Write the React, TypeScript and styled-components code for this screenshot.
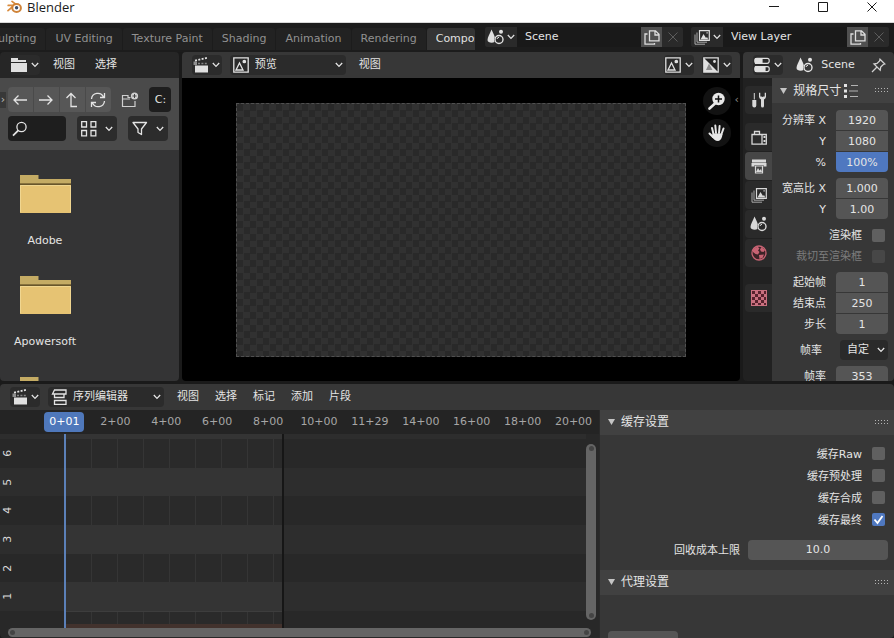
import React from "react";
import styled, { createGlobalStyle, css } from "styled-components";

const GlobalStyle = createGlobalStyle`
  *, *::before, *::after { box-sizing: border-box; }
  html, body { margin: 0; height: 100%; }
  #root { height: 100%; }
  body {
    background: #1a1a1a;
    color: #e4e4e4;
    font: 11px/16px "DejaVu Sans", "Noto Sans CJK SC", sans-serif;
    overflow: hidden;
  }
  button, input, select { font: inherit; color: inherit; margin: 0; }
  button { cursor: pointer; }
  svg { display: block; flex: none; }
`;

/* ---------- icons ---------- */

const Line = styled.svg`
  fill: none;
  stroke: currentColor;
  stroke-width: 1.3;
`;

const BlenderLogo = () => (
  <svg width="15" height="14" viewBox="0 0 15 14" fill="none">
    <path d="M1 10.6 7.6 5M1.2 5.4h7M5 1.4l5 3.8" stroke="#d98b3c" strokeWidth="1.7" strokeLinecap="round" />
    <ellipse cx="9.6" cy="8" rx="4.3" ry="3.9" stroke="#cf8338" strokeWidth="2" fill="#fff" />
    <circle cx="9.6" cy="7.8" r="1.7" fill="#3b4d68" />
  </svg>
);

const Chevron = () => (
  <Line width="8" height="6" viewBox="0 0 8 6">
    <path d="M.8 1 4 4.4 7.2 1" />
  </Line>
);

const ArrowLeft = () => (
  <Line width="16" height="16" viewBox="0 0 16 16">
    <path d="M15 8H2M6.5 3.5 2 8l4.500 4.500" />
  </Line>
);
const ArrowRight = () => (
  <Line width="16" height="16" viewBox="0 0 16 16">
    <path d="M1 8h13M9.500 3.500 14 8l-4.500 4.500" />
  </Line>
);
const ArrowUp = () => (
  <Line width="16" height="16" viewBox="0 0 16 16">
    <path d="M7 1.500V14.500h6M2.500 6 7 1.500 11.500 6" />
  </Line>
);
const Refresh = () => (
  <Line width="18" height="16" viewBox="0 0 18 16">
    <path d="M2.500 7A6.300 6.300 0 0 1 14.500 5M15.500 9A6.300 6.300 0 0 1 3.500 11M15.500 1v4.500H11M2.500 15v-4.500H7" />
  </Line>
);
const FolderSmall = () => (
  <svg width="16" height="14" viewBox="0 0 16 14" fill="currentColor">
    <path d="M0 0h7v2h8v2H0zM0 5h16v9H0z" />
  </svg>
);
const NewFolder = () => (
  <svg width="18" height="16" viewBox="0 0 18 16" fill="none" stroke="currentColor">
    <path d="M9.500 5.500H7v-2H1.500v11h12.500V9M1.500 7H9" strokeWidth="1.200" />
    <circle cx="13.500" cy="4" r="3.600" fill="currentColor" stroke="none" />
    <path d="M13.500 2v4M11.500 4h4" stroke="#444" />
  </svg>
);
const SearchIcon = () => (
  <Line width="16" height="16" viewBox="0 0 16 16">
    <circle cx="9.500" cy="6" r="4.600" />
    <path d="M6.300 9.300 1 14.600" strokeWidth="1.800" />
  </Line>
);
const GridIcon = () => (
  <Line width="16" height="16" viewBox="0 0 16 16">
    <path d="M.7.700h4.800v5.300H.700zM10 .700h4.800v5.300H10zM.700 9.500h4.800v5.300H.700zM10 9.500h4.800v5.300H10z" />
  </Line>
);
const FunnelIcon = () => (
  <Line width="16" height="16" viewBox="0 0 16 16">
    <path d="M1 1.500h13.500L9.500 8v5.500L6 11.500V8z" strokeLinejoin="round" />
  </Line>
);
const Clapper = () => (
  <svg width="15" height="16" viewBox="0 0 15 16" fill="currentColor">
    <path d="M2 8.500h13V15.500H2z" />
    <path d="M.5 4.500h3.500v3.500H.500z" opacity=".55" />
    <path d="M2 3.600 14 .900" fill="none" stroke="currentColor" strokeWidth="1.800" strokeDasharray="2 1.400" />
    <path d="M5 6.500h9.500" fill="none" stroke="currentColor" strokeWidth="1.400" strokeDasharray="2 1.400" opacity=".5" />
  </svg>
);
const Picture = () => (
  <Line width="16" height="16" viewBox="0 0 16 16">
    <path d="M.8.800h14.400v14.400H.800z" />
    <path d="m3 13 3.500-7L10 13z" />
    <circle cx="11.300" cy="4.500" r="1.200" fill="currentColor" />
  </Line>
);
const PictureAlpha = () => (
  <svg width="16" height="16" viewBox="0 0 16 16">
    <path d="M.8.800h14.400v14.400H.800z" fill="#232323" stroke="currentColor" strokeWidth="1.300" />
    <path d="M1 1v14h14z" fill="currentColor" />
    <path d="m3 13 3-6.500L9.500 13z" fill="#8c8c8c" />
    <circle cx="11.500" cy="4.500" r="1.400" fill="currentColor" />
  </svg>
);
const SceneIcon = () => (
  <svg width="17" height="16" viewBox="0 0 17 16" fill="currentColor">
    <path d="M4.500.500C6 3.500 7.200 6 7.800 8.200 7 9.500 6.800 11.500 7.500 13 5 14.500.500 13.500.500 11 .500 8.500 3 4.500 4.500.500z" />
    <circle cx="14" cy="2.700" r="2" />
    <circle cx="12" cy="10.500" r="4" fill="none" stroke="currentColor" strokeWidth="1.400" />
    <path d="M10 10a2.200 2.200 0 0 1 2-1.700" fill="none" stroke="currentColor" />
  </svg>
);
const Layers = () => (
  <svg width="16" height="15" viewBox="0 0 16 15" fill="none" stroke="currentColor">
    <path d="M1 4.500v9.700h10M3 2.500v9.700h10" opacity=".7" />
    <path d="M5.500.700h9.800v9.600H5.500z" strokeWidth="1.200" />
    <path d="m6.500 9.500 3-5.500 2.500 4 1-1 1.300 2.500zM12.500 2.300h1.200v1.200h-1.200z" fill="currentColor" stroke="none" />
  </svg>
);
const Copy = () => (
  <Line width="16" height="15" viewBox="0 0 16 15">
    <path d="M5.500.800h6l3.500 3.500v6.500H5.500zM11 .800V5h4M3.500 4H1v10.200h9.500V13" />
  </Line>
);
const Cross = () => (
  <Line width="10" height="10" viewBox="0 0 10 10">
    <path d="m.5.500 9 9M9.500.500l-9 9" strokeWidth="1" />
  </Line>
);
const Minimize = () => (
  <Line width="10" height="10" viewBox="0 0 10 10"><path d="M0 4.500h10" strokeWidth="1" /></Line>
);
const Maximize = () => (
  <Line width="10" height="10" viewBox="0 0 10 10"><path d="M.500.500h9v9h-9z" strokeWidth="1" /></Line>
);
const PropsIcon = () => (
  <svg width="16" height="16" viewBox="0 0 16 16" fill="none" stroke="currentColor" strokeWidth="1.200">
    <rect x=".8" y="1.300" width="14.400" height="5" rx="2" />
    <path d="M1.500 1.500H8v4.800H1.500zM1.500 9.700H11v4.800H1.500z" fill="currentColor" />
    <rect x=".8" y="9.600" width="14.400" height="5" rx="2" />
  </svg>
);
const Pin = () => (
  <Line width="15" height="15" viewBox="0 0 15 15">
    <path d="m9 1.200 4.800 4.800-1.500.500-2.600 2.600-.5 3L3 6l3-.5 2.600-2.600zM6 9 1 14" />
  </Line>
);
const ZoomIcon = () => (
  <svg width="18" height="18" viewBox="0 0 18 18">
    <path d="M7.500 11 1.500 16.500" stroke="#e8e8e8" strokeWidth="2.600" strokeLinecap="round" />
    <circle cx="10.500" cy="7" r="6.200" fill="#e8e8e8" />
    <path d="M10.500 3.500v7M7 7h7" stroke="#111" strokeWidth="1.500" />
  </svg>
);
const HandIcon = () => (
  <svg width="18" height="18" viewBox="0 0 18 18" fill="#e8e8e8" stroke="#e8e8e8" strokeLinecap="round">
    <path d="M5.500 10 4 4M8 9 7.300 1.500M11 9l.6-7M13.500 10l2-5.500M5 13 1.500 9.500" strokeWidth="2" />
    <path d="M4.500 9.500h9.500l.5 1c-.5 3-1.500 6-4.500 6.500-3 0-4.500-2-6-4z" stroke="none" />
  </svg>
);
const Tools = () => (
  <svg width="16" height="16" viewBox="0 0 16 16" fill="currentColor">
    <path d="M2.800 1h1v6.500h-1zM1.300 8h4v5.500q0 2-2 2t-2-2z" />
    <path d="M8 .800v4q0 1.800 2 2.600V14q0 1.500 1.500 1.500T13 14V7.400q2-.8 2-2.600v-4h-1.300V4.500h-1.200L11.500 5l-1-.5H9.300V.800z" />
  </svg>
);
const RenderIcon = () => (
  <Line width="16" height="15" viewBox="0 0 16 15">
    <path d="M1 4.500h14.300v9.700H1zM3.500 4.500V1.500h5v3M11 4.500v9.700" />
    <path d="M12.500 6h2v2h-2zM12.500 10h2v2h-2z" fill="currentColor" stroke="none" />
  </Line>
);
const Printer = () => (
  <svg width="16" height="15" viewBox="0 0 16 15" fill="currentColor">
    <path d="M1 .5h14v3H1zM.500 4h15v3.500h-3V6h-9v1.500h-3z" />
    <path d="M4.500 7h7v7h-7z" fill="none" stroke="currentColor" strokeWidth="1.200" />
    <path d="m5 13 2-4 1.500 2.500L10 10l1 3z" />
  </svg>
);
const World = () => (
  <svg width="16" height="16" viewBox="0 0 16 16">
    <circle cx="8" cy="8" r="7" fill="#3c2327" stroke="#c76373" strokeWidth="1.300" />
    <path d="M2 4.500Q4 1.500 7 2l1.500 1.500L7 5.500 8.500 7 7 9.500 4.500 9 2 7zM10.500 2l3.500 3-1.500 2-2.500-.5L9 4.500zM8 10l5-.5-1.500 3.500-3 1z" fill="#c76373" />
  </svg>
);
const Texture = () => (
  <svg width="16" height="16" viewBox="0 0 16 16">
    <path d="M0 0h16v16H0z" fill="#c9707f" />
    <path d="M1 1h3v3H1zM7 1h3v3H7zM4 4h3v3H4zM10 4h3v3h-3zM1 7h3v3H1zM7 7h3v3H7zM4 10h3v3H4zM10 10h3v3h-3zM1 13h3v2H1zM7 13h3v2H7zM13 13h2v2h-2zM13 1h2v3h-2zM13 7h2v3h-2z" fill="#58222d" />
  </svg>
);
const ListIcon = () => (
  <svg width="16" height="14" viewBox="0 0 16 14" fill="currentColor">
    <path d="M1 0h3v3H1zM1 5.500h3v3H1zM1 11h3v3H1z" />
    <path d="M8 1.500h7M6 7h9M7 12.500h8" stroke="currentColor" opacity=".7" />
  </svg>
);
const Grip = () => (
  <svg width="13" height="5" viewBox="0 0 13 5" fill="#b4b4b4">
    <path d="M0 0h1v1H0zM3 0h1v1H3zM6 0h1v1H6zM9 0h1v1H9zM12 0h1v1h-1zM0 3h1v1H0zM3 3h1v1H3zM6 3h1v1H6zM9 3h1v1H9zM12 3h1v1h-1z" />
  </svg>
);
const SequencerIcon = () => (
  <Line width="16" height="16" viewBox="0 0 16 16">
    <path d="M3.500 1H15v4H1.500zM3.500 5v3.500h9.500V5M3.500 11.500h11.500v3.800H3.500z" />
  </Line>
);
const FolderBig = () => (
  <svg width="51" height="38" viewBox="0 0 51 38">
    <path d="M0 0h18.500v4H51v6H0z" fill="#c4ab64" />
    <path d="M0 8.500h51v1.300H0z" fill="#4a3a18" />
    <path d="M0 10h51v28H0z" fill="#e6c373" />
    <path d="M.500 37V10.500h50V37" fill="none" stroke="#f0d690" />
  </svg>
);
const Triangle = () => (
  <svg width="7" height="6" viewBox="0 0 7 6" fill="#c4c4c4"><path d="M0 0h7L3.500 6z" /></svg>
);

/* ---------- window shell ---------- */

const Window = styled.div`
  height: 100vh;
  display: flex;
  flex-direction: column;
`;

const TitleBar = styled.header`
  flex: none;
  height: 23px;
  display: flex;
  align-items: flex-start;
  background: #fff;
  color: #1b1b1b;
  border-bottom: 1px solid #d8d8d8;
  padding: 0 17px 0 7px;
`;

const AppTitle = styled.h1`
  flex: 1;
  margin: 0 0 0 5px;
  font: 13px/14px "Open Sans", sans-serif;
`;

const WindowButtons = styled.div`
  display: flex;
  gap: 39px;
`;

const WindowButton = styled.button`
  border: 0;
  padding: 2px 0;
  background: none;
`;

const TopBar = styled.div`
  flex: none;
  height: 29px;
  display: flex;
  align-items: flex-start;
  gap: 8px;
  padding: 4px 5px 0 0;
  background: #1c1c1c;
`;

const TabStrip = styled.nav`
  flex: 1;
  min-width: 0;
  display: flex;
  gap: 1px;
  overflow: hidden;
  margin-top: 1px;
`;

const WorkspaceTab = styled.button<{ $active?: boolean; $cut?: boolean }>`
  flex: none;
  height: 22px;
  border: 0;
  border-radius: 3px 3px 0 0;
  padding: 0 9px;
  color: ${(p) => (p.$active ? "#e0e0e0" : "#919191")};
  background: ${(p) => (p.$active ? "#343434" : "#222")};
  ${(p) => p.$cut && css`margin-left: -24px;`}
  ${(p) => p.$active && css`padding-right: 0;`}
`;

const TabText = styled.span<{ $width?: number }>`
  display: block;
  overflow: hidden;
  ${(p) => p.$width && css`width: ${p.$width}px;`}
`;

const DataSelector = styled.div`
  flex: none;
  width: 198px;
  height: 20px;
  display: flex;
  border-radius: 3px;
  overflow: hidden;
  background: #2a2a2a;
`;

const DataButton = styled.button<{ $kind?: "menu" | "copy" | "dim" }>`
  flex: none;
  width: ${(p) => (p.$kind === "menu" ? 32 : 21)}px;
  display: flex;
  align-items: center;
  justify-content: center;
  gap: 3px;
  border: 0;
  padding: 0;
  background: ${(p) => (p.$kind === "copy" ? "#505050" : "#2a2a2a")};
  color: ${(p) => (p.$kind === "dim" ? "#5c5c5c" : "#dedede")};
`;

const DataName = styled.input`
  flex: 1;
  min-width: 0;
  border: 0;
  padding: 0 8px;
  background: #191919;
`;

const Upper = styled.div`
  flex: 330 1 0;
  min-height: 0;
  display: grid;
  grid-template-columns: 179fr 559fr 151fr;
  gap: 3px;
  padding-bottom: 3px;
`;

const Area = styled.section`
  min-width: 0;
  min-height: 0;
  display: flex;
  flex-direction: column;
  border-radius: 4px;
  overflow: hidden;
`;

const AreaHeader = styled.header<{ $dark?: boolean }>`
  flex: none;
  height: 26px;
  display: flex;
  align-items: center;
  gap: 8px;
  padding: 0 8px 0 10px;
  background: ${(p) => (p.$dark ? "#262626" : "#373737")};
`;

const EditorButton = styled.button`
  flex: none;
  height: 20px;
  width: 30px;
  display: flex;
  align-items: center;
  justify-content: center;
  gap: 4px;
  border: 0;
  border-radius: 4px;
  padding: 0;
  color: #e0e0e0;
  background: #2b2b2b;
`;

const MenuButton = styled.button`
  flex: none;
  border: 0;
  padding: 0;
  background: none;
`;

const MenuRow = styled.div<{ $wide?: boolean }>`
  display: flex;
  gap: ${(p) => (p.$wide ? 20 : 16)}px;
  margin-left: 5px;
`;

const DataPath = styled.div`
  display: flex;
  align-items: center;
  gap: 8px;
  margin-left: 5px;
`;

const Spacer = styled.span`
  flex: 1;
`;

const SelectBox = styled.label`
  flex: none;
  width: 116px;
  height: 20px;
  display: flex;
  align-items: center;
  gap: 6px;
  padding: 0 3px;
  border-radius: 4px;
  background: #2b2b2b;
`;

const BareSelect = styled.select`
  flex: 1;
  min-width: 0;
  appearance: none;
  border: 0;
  padding: 0;
  background: none;
`;

/* ---------- file browser ---------- */

const FileTools = styled.div`
  flex: none;
  display: flex;
  flex-direction: column;
  gap: 4px;
  padding: 9px 8px 9px 0;
  background: #4a4a4a;
`;

const ToolRow = styled.div<{ $indent?: boolean }>`
  display: flex;
  align-items: center;
  height: 25px;
  gap: 10px;
  ${(p) => p.$indent && css`padding-left: 8px; gap: 11px;`}
`;

const RegionHandle = styled.button`
  flex: none;
  width: 6px;
  height: 16px;
  border: 0;
  padding: 0;
  background: #383838;
  color: #bbb;
  margin-right: -8px;
  line-height: 14px;
`;

const NavGroup = styled.div`
  display: flex;
  gap: 1px;
  border-radius: 4px;
  overflow: hidden;
`;

const NavButton = styled.button`
  width: 26px;
  height: 25px;
  display: flex;
  align-items: center;
  justify-content: center;
  border: 0;
  padding: 0;
  background: #575757;
`;

const PlainButton = styled.button`
  border: 0;
  padding: 0;
  background: none;
  color: #d0d0d0;
`;

const PathInput = styled.input`
  width: 22px;
  height: 25px;
  border: 0;
  border-radius: 4px;
  padding: 0 0 0 6px;
  background: #1e1e1e;
`;

const SearchBox = styled.label`
  width: 58px;
  height: 25px;
  display: flex;
  align-items: center;
  padding: 0 4px;
  border-radius: 4px;
  background: #1e1e1e;
`;

const BareInput = styled.input`
  flex: 1;
  min-width: 0;
  border: 0;
  padding: 0;
  background: none;
`;

const DisplayButton = styled.button`
  width: 40px;
  height: 25px;
  display: flex;
  align-items: center;
  justify-content: center;
  gap: 8px;
  border: 0;
  border-radius: 4px;
  padding: 0;
  background: #2c2c2c;
`;

const FileList = styled.ul`
  flex: 1;
  min-height: 0;
  margin: 0;
  padding: 25px 0 0;
  list-style: none;
  overflow: hidden;
  background: #343435;
`;

const FileItem = styled.li`
  width: 90px;
  height: 101px;
  display: flex;
  flex-direction: column;
  align-items: center;
  gap: 20px;
`;

/* ---------- preview ---------- */

const PreviewBody = styled.div`
  position: relative;
  flex: 1;
  min-height: 0;
  display: flex;
  padding: 25px 54px 24px;
  background: #000;
`;

const Frame = styled.div`
  flex: 1;
  border: 1px dashed #505050;
  background: repeating-conic-gradient(#313131 0 25%, #292929 0 50%) 0 0 / 13px 13px;
`;

const Gizmos = styled.div`
  position: absolute;
  top: 9px;
  right: 9px;
  display: flex;
  flex-direction: column;
  gap: 4px;
`;

const Gizmo = styled.button`
  width: 28px;
  height: 28px;
  display: flex;
  align-items: center;
  justify-content: center;
  border: 0;
  border-radius: 50%;
  padding: 0;
  background: #121212;
`;

const SideToggle = styled.button`
  position: absolute;
  top: 14px;
  right: 0;
  width: 7px;
  border: 0;
  padding: 0;
  background: none;
  color: #8c8c8c;
`;

/* ---------- properties ---------- */

const PropsBody = styled.div`
  flex: 1;
  min-height: 0;
  display: flex;
  background: #212121;
`;

const TabColumn = styled.nav`
  flex: none;
  width: 29px;
  display: flex;
  flex-direction: column;
  gap: 1px;
  padding: 8px 0 0 2px;
`;

const PropTab = styled.button<{ $active?: boolean; $space?: number }>`
  height: 28px;
  display: flex;
  align-items: center;
  justify-content: center;
  border: 0;
  border-radius: 4px 0 0 4px;
  padding: 0;
  color: #d8d8d8;
  background: ${(p) => (p.$active ? "#464646" : "#2a2a2a")};
  margin-bottom: ${(p) => p.$space ?? 0}px;
`;

const PropPanel = styled.div`
  flex: 1;
  min-width: 0;
  overflow: hidden;
  background: #373737;
`;

const PanelHeader = styled.h2`
  display: flex;
  align-items: center;
  gap: 6px;
  height: 25px;
  margin: 0;
  padding: 0 6px 0 8px;
  font-size: 12px;
  font-weight: 400;
  white-space: nowrap;
  background: #414141;
`;

const PanelTitle = styled.span`
  flex: 1;
  display: flex;
  align-items: center;
  gap: 2px;
`;

const Groups = styled.div`
  display: flex;
  flex-direction: column;
  gap: 6px;
  padding: 7px 6px 0 0;
`;

const Group = styled.div`
  display: flex;
  flex-direction: column;
  gap: 1px;
`;

const Field = styled.label<{ $dim?: boolean }>`
  display: flex;
  align-items: center;
  justify-content: flex-end;
  gap: 10px;
  height: 20px;
  white-space: nowrap;
  color: ${(p) => (p.$dim ? "#7c7c7c" : "#e4e4e4")};
`;

const FieldText = styled.span`
  padding-top: 2px;
`;

const NumberInput = styled.input<{ $accent?: boolean; $edge?: "top" | "bottom" }>`
  width: 52px;
  height: 20px;
  border: 0;
  padding: 0;
  text-align: center;
  background: ${(p) => (p.$accent ? "#4f78c0" : "#555")};
  border-radius: ${(p) => (p.$edge === "top" ? "4px 4px 0 0" : p.$edge === "bottom" ? "0 0 4px 4px" : "0")};
`;

const RateSelect = styled.span`
  width: 48px;
  height: 20px;
  display: flex;
  align-items: center;
  padding: 0 3px 0 7px;
  border-radius: 4px;
  background: #2a2a2a;
`;

const RateField = styled(Field)`
  gap: 18px;
`;

const Check = styled.input<{ $dim?: boolean }>`
  appearance: none;
  flex: none;
  width: 13px;
  height: 13px;
  margin: 0 3px 0 0;
  border-radius: 2px;
  background: ${(p) => (p.$dim ? "#474747" : "#606060")};
  &:checked {
    background: #4f78c0 url("data:image/svg+xml,%3Csvg xmlns='http://www.w3.org/2000/svg' viewBox='0 0 13 13'%3E%3Cpath d='M2.500 6.500l3 3.500 5-7' fill='none' stroke='white' stroke-width='1.800'/%3E%3C/svg%3E");
  }
`;

/* ---------- sequencer ---------- */

const Lower = styled(Area)`
  flex: 255 1 0;
`;

const LowerBody = styled.div`
  flex: 1;
  min-height: 0;
  display: grid;
  grid-template-columns: 599fr 295fr;
`;

const Timeline = styled.div`
  min-width: 0;
  min-height: 0;
  display: flex;
  flex-direction: column;
  background: #282828;
`;

const Ruler = styled.div`
  flex: none;
  height: 24px;
  display: flex;
  align-items: center;
  padding-left: 39px;
  background: #242424;
  color: #a6a6a6;
`;

const Tick = styled.span`
  flex: 1 1 0;
  display: flex;
  justify-content: center;
`;

const TickLabel = styled.span<{ $current?: boolean }>`
  ${(p) =>
    p.$current &&
    css`
      width: 40px;
      text-align: center;
      line-height: 20px;
      border-radius: 4px;
      background: #4f78bb;
      color: #fff;
    `}
`;

const TrackArea = styled.div`
  flex: 1;
  min-height: 0;
  display: flex;
`;

const Tracks = styled.div`
  flex: 1;
  display: flex;
  flex-direction: column;
`;

const Track = styled.div<{ $light?: boolean; $part?: "first" | "last" }>`
  flex: ${(p) => (p.$part === "first" ? 5 : p.$part === "last" ? 17 : 29)} 1 0;
  min-height: 0;
  display: grid;
  grid-template-columns: 64fr 220fr 301fr;
  background: ${(p) => (p.$light ? "#2d2d2d" : "#282828")};
`;

const TrackNumber = styled.span`
  display: flex;
  align-items: center;
  justify-content: center;
  justify-self: start;
  width: 16px;
  writing-mode: vertical-rl;
  transform: rotate(180deg);
  color: #d8d8d8;
`;

const Range = styled.div<{ $light?: boolean; $last?: boolean }>`
  grid-column: 2;
  border-left: 2px solid #5b80b8;
  border-right: 2px solid #161616;
  background: ${(p) =>
    p.$light ? "#343434" : "repeating-linear-gradient(90deg, #2a2a2a 0 25px, #353535 25px 26px)"};
  ${(p) => p.$last && css`box-shadow: inset 0 -4px #42322d, inset 0 1px #3d3d3d;`}
`;

const VScroll = styled.div`
  flex: none;
  width: 13px;
  padding: 10px 3px 8px 0;
`;

const HScroll = styled.div`
  flex: none;
  height: 10px;
  padding: 0 8px 1px;
`;

const Thumb = styled.div<{ $vertical?: boolean }>`
  height: 100%;
  display: flex;
  flex-direction: ${(p) => (p.$vertical ? "column" : "row")};
  justify-content: space-between;
  align-items: center;
  padding: 2px;
  border-radius: 5px;
  background: #656565;
  &::before, &::after {
    content: "";
    width: 5px;
    height: 5px;
    border-radius: 50%;
    background: #444;
  }
`;

const Settings = styled.div`
  min-width: 0;
  overflow: hidden;
  border-left: 1px solid #2a2a2a;
  background: #373737;
`;

const CacheOptions = styled.div`
  display: flex;
  flex-direction: column;
  gap: 2px;
  padding: 9px 6px 0 8px;
`;

const CostField = styled(Field)`
  gap: 8px;
  padding: 0 6px 0 8px;
  margin: 10px 0;
`;

const CostInput = styled(NumberInput)`
  width: 140px;
  border-radius: 4px;
`;

const ProxyButton = styled.button`
  display: block;
  width: 70px;
  height: 20px;
  margin: 36px 0 0 8px;
  border: 0;
  border-radius: 4px;
  background: #555;
`;

const workspaces = ["UV Editing", "Texture Paint", "Shading", "Animation", "Rendering"];
const ticks = ["0+01", "2+00", "4+00", "6+00", "8+00", "10+00", "11+29", "14+00", "16+00", "18+00", "20+00"];
const cacheOptions = [
  { label: "缓存Raw", on: false },
  { label: "缓存预处理", on: false },
  { label: "缓存合成", on: false },
  { label: "缓存最终", on: true },
];

type FieldData = { label: string; value: string; accent?: boolean };

const resolution: FieldData[] = [
  { label: "分辨率 X", value: "1920" },
  { label: "Y", value: "1080" },
  { label: "%", value: "100%", accent: true },
];
const aspect: FieldData[] = [
  { label: "宽高比 X", value: "1.000" },
  { label: "Y", value: "1.00" },
];
const frames: FieldData[] = [
  { label: "起始帧", value: "1" },
  { label: "结束点", value: "250" },
  { label: "步长", value: "1" },
];

const NumberGroup = ({ fields }: { fields: FieldData[] }) => (
  <Group>
    {fields.map((f, i) => (
      <Field key={f.label}>
        <FieldText>{f.label}</FieldText>
        <NumberInput
          defaultValue={f.value}
          $accent={f.accent}
          $edge={i === 0 ? "top" : i === fields.length - 1 ? "bottom" : undefined}
        />
      </Field>
    ))}
  </Group>
);

const DataBlock = ({ icon, name }: { icon: React.ReactNode; name: string }) => (
  <DataSelector>
    <DataButton $kind="menu" aria-label={name}>{icon}<Chevron /></DataButton>
    <DataName defaultValue={name} aria-label={name} />
    <DataButton $kind="copy" aria-label="Copy"><Copy /></DataButton>
    <DataButton $kind="dim" aria-label="Remove"><Cross /></DataButton>
  </DataSelector>
);

const FileBrowser = () => (
  <Area>
    <AreaHeader $dark>
      <EditorButton aria-label="Editor type"><FolderSmall /><Chevron /></EditorButton>
      <MenuRow $wide>
        <MenuButton>视图</MenuButton>
        <MenuButton>选择</MenuButton>
      </MenuRow>
    </AreaHeader>
    <FileTools>
      <ToolRow>
        <RegionHandle aria-label="Show sidebar">›</RegionHandle>
        <NavGroup>
          <NavButton aria-label="Back"><ArrowLeft /></NavButton>
          <NavButton aria-label="Forward"><ArrowRight /></NavButton>
          <NavButton aria-label="Parent"><ArrowUp /></NavButton>
          <NavButton aria-label="Refresh"><Refresh /></NavButton>
        </NavGroup>
        <PlainButton aria-label="New folder"><NewFolder /></PlainButton>
        <PathInput defaultValue="C:" aria-label="Path" />
      </ToolRow>
      <ToolRow $indent>
        <SearchBox><SearchIcon /><BareInput aria-label="Search" /></SearchBox>
        <DisplayButton aria-label="Display mode"><GridIcon /><Chevron /></DisplayButton>
        <DisplayButton aria-label="Filter"><FunnelIcon /><Chevron /></DisplayButton>
      </ToolRow>
    </FileTools>
    <FileList>
      <FileItem><FolderBig />Adobe</FileItem>
      <FileItem><FolderBig />Apowersoft</FileItem>
      <FileItem><FolderBig /></FileItem>
    </FileList>
  </Area>
);

const Preview = () => (
  <Area>
    <AreaHeader>
      <EditorButton aria-label="Editor type"><Clapper /><Chevron /></EditorButton>
      <SelectBox>
        <Picture />
        <BareSelect aria-label="View type"><option>预览</option></BareSelect>
        <Chevron />
      </SelectBox>
      <MenuRow>
        <MenuButton>视图</MenuButton>
      </MenuRow>
      <Spacer />
      <EditorButton aria-label="Image"><Picture /><Chevron /></EditorButton>
      <EditorButton aria-label="Channels"><PictureAlpha /><Chevron /></EditorButton>
    </AreaHeader>
    <PreviewBody>
      <Frame />
      <Gizmos>
        <Gizmo aria-label="Zoom"><ZoomIcon /></Gizmo>
        <Gizmo aria-label="Move"><HandIcon /></Gizmo>
      </Gizmos>
      <SideToggle aria-label="Show sidebar">‹</SideToggle>
    </PreviewBody>
  </Area>
);

const Properties = () => (
  <Area>
    <AreaHeader>
      <EditorButton aria-label="Editor type"><PropsIcon /><Chevron /></EditorButton>
      <DataPath><SceneIcon />Scene</DataPath>
      <Spacer />
      <PlainButton aria-label="Pin"><Pin /></PlainButton>
    </AreaHeader>
    <PropsBody>
      <TabColumn>
        <PropTab $space={8} aria-label="Tool"><Tools /></PropTab>
        <PropTab aria-label="Render"><RenderIcon /></PropTab>
        <PropTab $active aria-label="Output"><Printer /></PropTab>
        <PropTab aria-label="View layer"><Layers /></PropTab>
        <PropTab aria-label="Scene"><SceneIcon /></PropTab>
        <PropTab $space={16} aria-label="World"><World /></PropTab>
        <PropTab aria-label="Texture"><Texture /></PropTab>
      </TabColumn>
      <PropPanel>
        <PanelHeader>
          <Triangle />
          <PanelTitle>规格尺寸<ListIcon /></PanelTitle>
          <Grip />
        </PanelHeader>
        <Groups>
          <NumberGroup fields={resolution} />
          <NumberGroup fields={aspect} />
          <Group>
            <Field><FieldText>渲染框</FieldText><Check type="checkbox" /></Field>
            <Field $dim><FieldText>裁切至渲染框</FieldText><Check type="checkbox" $dim disabled /></Field>
          </Group>
          <NumberGroup fields={frames} />
          <RateField>
            <FieldText>帧率</FieldText>
            <RateSelect>
              <BareSelect><option>自定</option></BareSelect>
              <Chevron />
            </RateSelect>
          </RateField>
          <NumberGroup fields={[{ label: "帧率", value: "353" }]} />
        </Groups>
      </PropPanel>
    </PropsBody>
  </Area>
);

const Sequencer = () => (
  <Lower>
    <AreaHeader>
      <EditorButton aria-label="Editor type"><Clapper /><Chevron /></EditorButton>
      <SelectBox>
        <SequencerIcon />
        <BareSelect aria-label="Editor mode"><option>序列编辑器</option></BareSelect>
        <Chevron />
      </SelectBox>
      <MenuRow>
        {["视图", "选择", "标记", "添加", "片段"].map((m) => <MenuButton key={m}>{m}</MenuButton>)}
      </MenuRow>
    </AreaHeader>
    <LowerBody>
      <Timeline>
        <Ruler>
          {ticks.map((t, i) => (
            <Tick key={t}><TickLabel $current={i === 0}>{t}</TickLabel></Tick>
          ))}
        </Ruler>
        <TrackArea>
          <Tracks>
            <Track $light $part="first"><Range $light /></Track>
            {[6, 5, 4, 3, 2, 1].map((n) => (
              <Track key={n} $light={n % 2 === 1}>
                <TrackNumber>{n}</TrackNumber>
                <Range $light={n % 2 === 1} />
              </Track>
            ))}
            <Track $part="last"><Range $last /></Track>
          </Tracks>
          <VScroll><Thumb $vertical /></VScroll>
        </TrackArea>
        <HScroll><Thumb /></HScroll>
      </Timeline>
      <Settings>
        <PanelHeader><Triangle /><PanelTitle>缓存设置</PanelTitle><Grip /></PanelHeader>
        <CacheOptions>
          {cacheOptions.map((o) => (
            <Field key={o.label}>
              <FieldText>{o.label}</FieldText>
              <Check type="checkbox" defaultChecked={o.on} />
            </Field>
          ))}
        </CacheOptions>
        <CostField><FieldText>回收成本上限</FieldText><CostInput defaultValue="10.0" /></CostField>
        <PanelHeader><Triangle /><PanelTitle>代理设置</PanelTitle><Grip /></PanelHeader>
        <ProxyButton aria-label="Proxy" />
      </Settings>
    </LowerBody>
  </Lower>
);

export default function App() {
  return (
    <Window>
      <GlobalStyle />
      <TitleBar>
        <BlenderLogo />
        <AppTitle>Blender</AppTitle>
        <WindowButtons>
          <WindowButton aria-label="Minimize"><Minimize /></WindowButton>
          <WindowButton aria-label="Maximize"><Maximize /></WindowButton>
          <WindowButton aria-label="Close"><Cross /></WindowButton>
        </WindowButtons>
      </TitleBar>
      <TopBar>
        <TabStrip>
          <WorkspaceTab $cut>Sculpting</WorkspaceTab>
          {workspaces.map((w) => <WorkspaceTab key={w}>{w}</WorkspaceTab>)}
          <WorkspaceTab $active><TabText $width={39}>Compositing</TabText></WorkspaceTab>
        </TabStrip>
        <DataBlock icon={<SceneIcon />} name="Scene" />
        <DataBlock icon={<Layers />} name="View Layer" />
      </TopBar>
      <Upper>
        <FileBrowser />
        <Preview />
        <Properties />
      </Upper>
      <Sequencer />
    </Window>
  );
}
